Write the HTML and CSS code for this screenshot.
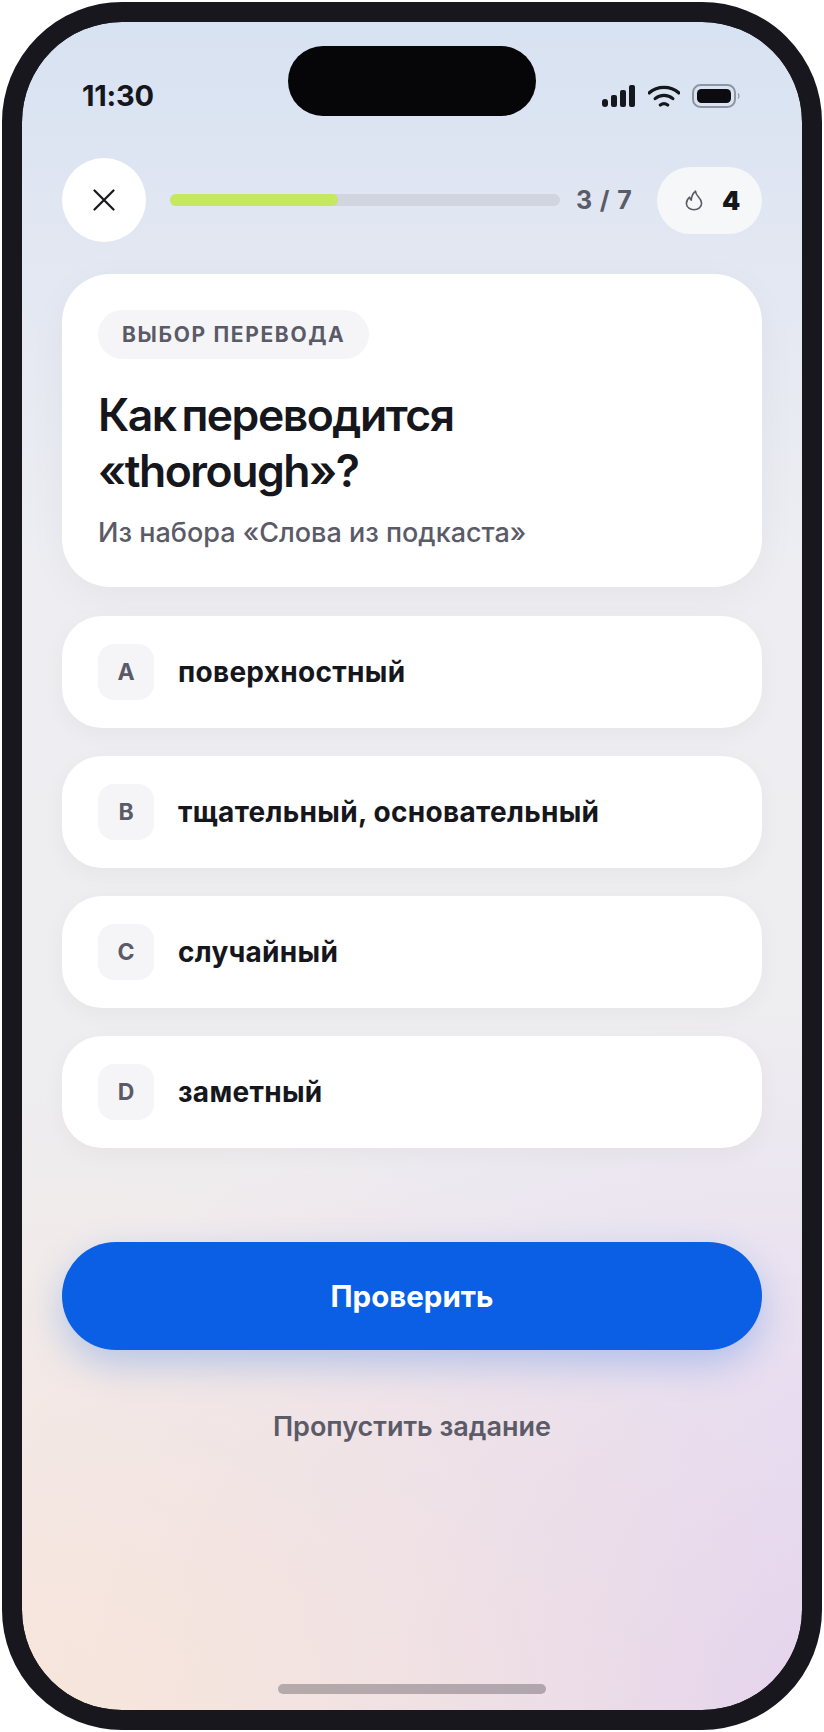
FILE: index.html
```html
<!DOCTYPE html>
<html lang="ru">
<head>
<meta charset="utf-8">
<title>Выбор перевода</title>
<link rel="stylesheet" href="styles.css">
</head>
<body>
<div class="phone">
  <div class="screen">
    <div class="island"></div>
    <div class="status">
      <span class="time">11:30</span>
      <div class="status-icons">
        <svg class="i-signal" width="34" height="22" viewBox="0 0 34 22"><rect x="0" y="14" width="6" height="8" rx="3"/><rect x="9" y="10" width="6" height="12" rx="2"/><rect x="18" y="5" width="6" height="17" rx="2"/><rect x="27" y="0" width="6" height="22" rx="2"/></svg>
        <svg class="i-wifi" width="32" height="22" viewBox="1 0 30 21" fill="none" stroke="#16161d" stroke-linecap="round"><path d="M2 7.5C9.8 .5 22.2 .5 30 7.5" stroke-width="3.2"/><path d="M7.5 13C12.4 8.8 19.6 8.8 24.5 13" stroke-width="3"/><path d="M12.5 19.2C14.6 17.6 17.4 17.6 19.5 19.2" stroke-width="3"/></svg>
        <svg class="i-batt" width="48" height="24" viewBox="0 0 48 24"><rect x="1" y="1" width="42" height="22" rx="7.5" fill="none" stroke="#8f95a3" stroke-width="2"/><rect x="5" y="5" width="34" height="14" rx="4.5" fill="#0b0b10"/><path d="M46 9.5c1.2 1 1.2 4 0 5" fill="none" stroke="#8f95a3" stroke-width="1.2"/></svg>
      </div>
    </div>

    <div class="topbar">
      <button class="close"><svg width="22" height="22" viewBox="0 0 22 22" fill="none" stroke="#16161d" stroke-width="2.2" stroke-linecap="round"><path d="M1.5 1.5l19 19M20.5 1.5l-19 19"/></svg></button>
      <div class="track"><div class="fill"></div></div>
      <span class="count">3 / 7</span>
      <div class="streak">
        <svg width="18" height="21" viewBox="0 0 18 21" fill="none" stroke="#5b5b68" stroke-width="1.6" stroke-linejoin="round"><path d="M10.5 1.2c.2 2.5 1.3 4 3 5.8 1.900 2 3.100 4 3.100 6.300 0 3.800-3.300 6.400-7.600 6.400S1.400 17.100 1.400 13.500c0-2.600 1.300-4.700 3.300-6.300.1 1.400.6 2.400 1.600 3C6.400 7 8 3.400 10.500 1.200z"/></svg>
        <b>4</b>
      </div>
    </div>

    <section class="card">
      <span class="tag">ВЫБОР ПЕРЕВОДА</span>
      <h1>Как переводится «thorough»?</h1>
      <p>Из набора «Слова из подкаста»</p>
    </section>

    <div class="options">
      <div class="option"><span class="key">A</span><span class="label">поверхностный</span></div>
      <div class="option"><span class="key">B</span><span class="label">тщательный, основательный</span></div>
      <div class="option"><span class="key">C</span><span class="label">случайный</span></div>
      <div class="option"><span class="key">D</span><span class="label">заметный</span></div>
    </div>

    <button class="check">Проверить</button>
    <div class="skip">Пропустить задание</div>
    <div class="home"></div>
  </div>
</div>
</body>
</html>
```
FILE: styles.css
```css
* { box-sizing: border-box; margin: 0; padding: 0; }
html, body { background: #fff; }
body { width: 824px; height: 1732px; padding: 2px; font-family: Inter, "Noto Sans", sans-serif; color: #16161d; overflow: hidden; }
button { font: inherit; border: 0; }

.phone { width: 820px; height: 1728px; border: 20px solid #17171d; border-radius: 120px; overflow: hidden; background: #17171d; }
.screen {
  position: relative; width: 780px; height: 1688px; border-radius: 100px; overflow: hidden;
  padding: 0 40px;
  background:
    radial-gradient(900px 620px at 0% 100%, rgba(248,229,217,.95), rgba(248,229,217,0) 100%),
    radial-gradient(900px 700px at 100% 100%, rgba(226,209,240,1), rgba(226,209,240,0) 100%),
    linear-gradient(180deg, #d7e2f2 0, #e2e7f2 220px, #eeeef2 560px, #eeedf0 1000px, #efecf0 1688px);
}
.island { position: absolute; left: 266px; top: 24px; width: 248px; height: 70px; border-radius: 35px; background: #060608; }

.status { display: flex; justify-content: space-between; align-items: center; height: 32px; margin-top: 58px; padding-left: 20px; padding-right: 22px; }
.time { font-size: 29px; font-weight: 700; letter-spacing: -.2px; line-height: 32px; }
.status-icons { display: flex; align-items: center; gap: 12px; }
.i-signal { fill: #16161d; }

.topbar { display: flex; align-items: center; margin-top: 46px; height: 84px; }
.close { width: 84px; height: 84px; border-radius: 50%; background: #fff; display: flex; align-items: center; justify-content: center; flex: none; }
.track { width: 390px; height: 12px; margin-left: 24px; border-radius: 6px; background: #d0d5e0; flex: none; }
.fill { width: 168px; height: 12px; border-radius: 6px; background: #c5e85f; }
.count { margin-left: 16px; font-size: 25px; font-weight: 700; letter-spacing: .9px; color: #5b5b68; width: 80px; flex: none; white-space: nowrap; }
.streak { margin-left: auto; width: 105px; height: 67px; border-radius: 34px; background: #f6f7f9; display: flex; align-items: center; padding-left: 28px; gap: 19px; }
.streak b { font-size: 26px; font-weight: 900; }

.card { margin-top: 32px; height: 313px; border-radius: 48px; background: #fff; padding: 36px; box-shadow: 0 10px 40px rgba(22,22,29,.04); }
.tag { display: inline-block; height: 49px; line-height: 49px; padding: 0 24px; border-radius: 25px; background: #f5f5f8; font-size: 21px; font-weight: 700; letter-spacing: 1.65px; color: #5b5b68; }
h1 { margin-top: 28px; font-size: 44.5px; line-height: 56px; font-weight: 620; letter-spacing: -1.5px; word-spacing: -4px; width: 420px; color: #16161d; }
.card p { margin-top: 16px; font-size: 27px; line-height: 36px; font-weight: 500; color: #5b5b68; }

.options { margin-top: 29px; display: flex; flex-direction: column; gap: 28px; }
.option { height: 112px; border-radius: 40px; background: #fff; display: flex; align-items: center; padding-left: 36px; box-shadow: 0 6px 24px rgba(22,22,29,.04); }
.key { width: 56px; height: 56px; border-radius: 16px; background: #f5f5f8; display: flex; align-items: center; justify-content: center; font-size: 23px; font-weight: 700; color: #5b5b68; flex: none; }
.label { margin-left: 24px; font-size: 28px; font-weight: 700; letter-spacing: .3px; }

.check { display: block; width: 700px; height: 108px; margin-top: 94px; border-radius: 54px; background: #0a5fe4; color: #fff; font-size: 29.5px; font-weight: 700; box-shadow: 0 14px 36px rgba(10,95,228,.25); }
.skip { margin-top: 59px; text-align: center; font-size: 27px; line-height: 36px; font-weight: 600; color: #5b5b68; }
.home { position: absolute; left: 256px; bottom: 16px; width: 268px; height: 10px; border-radius: 5px; background: rgba(22,22,29,.28); }
```
